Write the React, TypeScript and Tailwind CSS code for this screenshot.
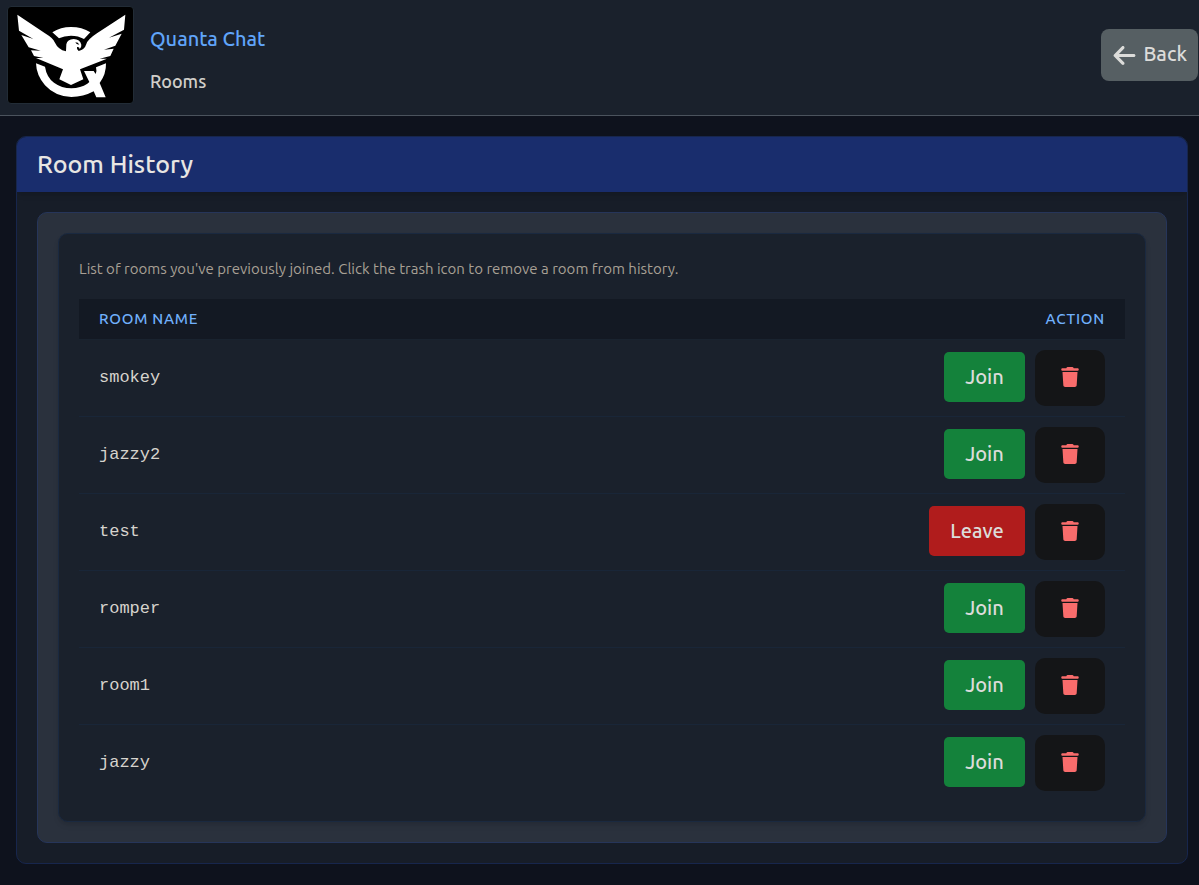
import { useState } from "react";
import { FaArrowLeft, FaTrash } from "react-icons/fa6";

type Room = { name: string; joined: boolean };

const initialRooms: Room[] = [
  { name: "smokey", joined: false },
  { name: "jazzy2", joined: false },
  { name: "test", joined: true },
  { name: "romper", joined: false },
  { name: "room1", joined: false },
  { name: "jazzy", joined: false },
];

function Logo() {
  return (
    <svg
      viewBox="24 21 375 288"
      role="img"
      aria-label="Quanta Chat logo"
      className="h-[98px] w-[127px] rounded-sm border border-[#222c36] bg-black"
    >
      <g fill="#fff">
        <path d="M157 97 Q182 81 213 81 Q246 81 271 97 L252 117 Q235 107 213 107 Q192 107 177 115 Z" />
        <path d="M52 44 L135 100 Q160 115 165 128 Q174 148 198 154 L199 133 Q202 118 221 117 Q240 118 244 134 Q245 142 239 147 Q239 140 231 141 Q229 148 236 153 Q254 149 259 132 Q263 118 292 99 L376 44 L372 89 L327 113 L365 101 L346 137 L312 149 L341 146 L331 168 L299 176 L321 176 L240 208 L250 238 L213 255 L178 238 L189 208 L108 174 L130 174 L102 168 L93 151 L122 152 L86 142 L64 105 L100 117 L57 92 Z" />
        <path d="M108 190 L135 200 Q140 232 162 248 Q185 265 214 265 Q242 264 262 251 L268 246 L252 213 L281 213 L287 222 Q291 212 288 202 L318 190 Q319 222 299 249 L317 292 L289 292 L281 274 Q250 291 214 291 Q166 290 135 256 Q109 226 108 190 Z" />
      </g>
      <path d="M226 127 Q235 127 238 134 L230 132 Z" fill="#000" />
    </svg>
  );
}

function Header() {
  return (
    <header className="flex items-start justify-between border-b border-[#4b535d] bg-[#1a212c] pt-1.5 pr-px pb-[11px] pl-[7px]">
      <div className="flex items-start gap-4">
        <Logo />
        <div className="flex flex-col gap-4 pt-[19px]">
          <h1 className="text-xl leading-7 font-medium text-[#60a5fa]">Quanta Chat</h1>
          <p className="text-lg leading-6 font-medium text-[#d1cfca]">Rooms</p>
        </div>
      </div>
      <button
        type="button"
        className="mt-[23px] flex h-[52px] items-center gap-1.5 rounded-lg bg-[#565f63] px-[11px] text-xl leading-6 font-medium text-[#dcdcda]"
      >
        <FaArrowLeft size={25} aria-hidden />
        <span className="pb-0.5">Back</span>
      </button>
    </header>
  );
}

export default function App() {
  const [rooms, setRooms] = useState(initialRooms);

  const toggle = (name: string) =>
    setRooms(rooms.map((r) => (r.name === name ? { ...r, joined: !r.joined } : r)));
  const remove = (name: string) => setRooms(rooms.filter((r) => r.name !== name));

  return (
    <div className="min-h-screen bg-[#0e121d] font-['Ubuntu','Noto_Sans',sans-serif] text-[#e8e6e3]">
      <Header />
      <main className="pt-5 pr-[11px] pb-5 pl-4">
        <section className="overflow-hidden rounded-[10px] border border-[#17264d] bg-[#171d28]">
          <div className="bg-[#192d6d] px-5 py-2.5 shadow-md">
            <h2 className="text-[25px] leading-[35px] font-medium">Room History</h2>
          </div>
          <div className="p-5">
            <div className="rounded-[10px] border border-[#26355a] bg-[#2a313d] p-5">
              <div className="rounded-[10px] border border-[#1a2940] bg-[#1a212c] p-5 shadow-md">
                <p className="mt-1 mb-[19px] text-[15px] leading-[22px] text-[#a8a095]">
                  List of rooms you've previously joined. Click the trash icon to remove a room from history.
                </p>
                <table className="w-full border-collapse">
                  <thead>
                    <tr className="h-10 border-b border-[#19232f] bg-[#131923] text-[15px] tracking-wider text-[#70b0fb] uppercase">
                      <th scope="col" className="px-5 text-left font-medium">Room Name</th>
                      <th scope="col" className="px-5 text-right font-medium">Action</th>
                    </tr>
                  </thead>
                  <tbody>
                    {rooms.map((room) => (
                      <tr key={room.name} className="border-b border-[#192638] last:border-b-0">
                        <td className="px-5 font-['Liberation_Mono',monospace] text-[17px] text-[#d6d3cd]">
                          {room.name}
                        </td>
                        <td className="px-5 py-2.5">
                          <div className="flex items-start justify-end gap-2.5">
                            <button
                              type="button"
                              onClick={() => toggle(room.name)}
                              className={
                                room.joined
                                  ? "mt-0.5 h-[50px] w-24 rounded-[5px] bg-[#b01c1c] text-xl font-medium text-[#dcdcda]"
                                  : "mt-0.5 h-[50px] w-[81px] rounded-[5px] bg-[#14823b] text-xl font-medium text-[#dcdcda]"
                              }
                            >
                              {room.joined ? "Leave" : "Join"}
                            </button>
                            <button
                              type="button"
                              aria-label={`Remove ${room.name} from history`}
                              onClick={() => remove(room.name)}
                              className="flex h-14 w-[70px] items-center justify-center rounded-[10px] bg-[#141517] pb-0.5 text-[#f96c6c]"
                            >
                              <FaTrash size={20} aria-hidden />
                            </button>
                          </div>
                        </td>
                      </tr>
                    ))}
                  </tbody>
                </table>
              </div>
            </div>
          </div>
        </section>
      </main>
    </div>
  );
}
